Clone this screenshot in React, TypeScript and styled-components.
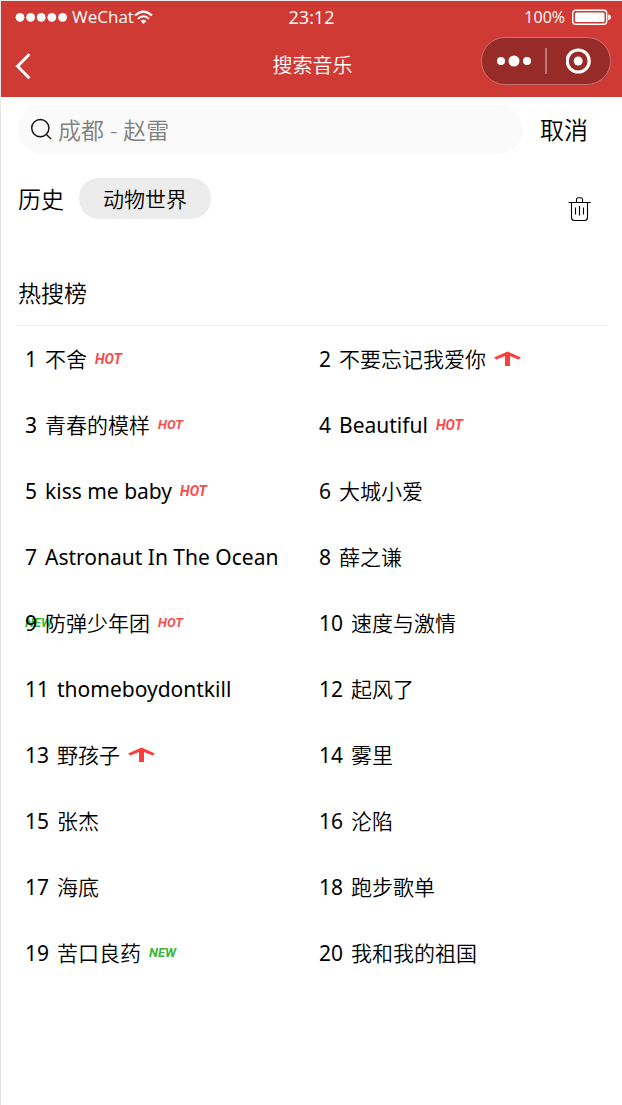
import React from "react";
import styled, { createGlobalStyle } from "styled-components";

const GlobalStyle = createGlobalStyle`
  *, *::before, *::after { box-sizing: border-box; }
  body {
    margin: 0;
    background: #fff;
    color: #000;
    font-family: "Noto Sans", "Noto Sans CJK SC", sans-serif;
  }
  button, input { font: inherit; color: inherit; }
  button { padding: 0; border: 0; background: none; cursor: pointer; }
  a { color: inherit; text-decoration: none; }
  svg { display: block; flex: none; }
`;

const Page = styled.div`
  min-height: 100vh;
  border-top: 1px solid #ebebeb;
  border-left: 1px solid #e5e5e5;
`;

const Header = styled.header`
  height: 96px;
  background: #d03a35;
  color: #fff;
`;

const Bar = styled.div<{ $height: number }>`
  display: grid;
  grid-template-columns: 1fr auto 1fr;
  align-items: center;
  height: ${(p) => p.$height}px;
  padding: 0 11px 0 14px;
`;

const TitleBar = styled(Bar)`
  padding: 2px 11px 0 13px;
`;

const StatusGroup = styled.div<{ $end?: boolean; $size: number }>`
  display: flex;
  align-items: center;
  justify-content: ${(p) => (p.$end ? "flex-end" : "flex-start")};
  font-family: "Open Sans", sans-serif;
  font-size: ${(p) => p.$size}px;
  line-height: 24px;
`;

const Clock = styled.time`
  margin-right: 3px;
  font-family: "Open Sans", sans-serif;
  font-size: 18px;
  line-height: 24px;
`;

const Signal = styled.svg`
  margin-right: 4px;
`;

const Battery = styled.svg`
  margin-left: 6px;
`;

const BackButton = styled.button`
  justify-self: start;
  color: #fff;
`;

const Title = styled.h1`
  margin: 0;
  font-size: 20px;
  line-height: 28px;
  font-weight: 350;
`;

const Capsule = styled.div`
  align-self: start;
  justify-self: end;
  display: flex;
  align-items: center;
  width: 130px;
  height: 48px;
  margin-top: 2px;
  border: 1px solid #c27370;
  border-radius: 24px;
  background: #962b27;
`;

const CapsuleButton = styled.button`
  flex: 1;
  display: flex;
  justify-content: center;
  color: #fff;
`;

const CapsuleDivider = styled.span`
  width: 2px;
  height: 26px;
  background: #bd7774;
`;

const Content = styled.main`
  padding: 8px 16px 0 17px;
`;

const SearchRow = styled.form`
  display: flex;
  align-items: center;
  height: 49px;
`;

const SearchBox = styled.label`
  flex: 1;
  display: flex;
  align-items: center;
  gap: 5px;
  height: 100%;
  padding: 0 12px;
  border-radius: 25px;
  background: #fafafa;
`;

const SearchInput = styled.input`
  flex: 1;
  min-width: 0;
  padding: 0;
  border: 0;
  outline: none;
  background: transparent;
  font-size: 23px;
  line-height: 32px;
  font-weight: 350;
  &::placeholder { color: #808080; opacity: 1; }
`;

const CancelButton = styled.button`
  margin: 0 18px 0 17px;
  font-size: 24px;
  line-height: 32px;
  font-weight: 350;
`;

const History = styled.section`
  display: flex;
  align-items: center;
  gap: 15px;
  margin-top: 24px;
  height: 41px;
`;

const Heading = styled.h2`
  margin: 0;
  font-size: 23px;
  line-height: 32px;
  font-weight: 350;
`;

const Chip = styled.button`
  height: 41px;
  padding: 0 24px;
  border-radius: 20px;
  background: #ececec;
  font-size: 21px;
  line-height: 32px;
  font-weight: 350;
`;

const ClearButton = styled.button`
  align-self: flex-end;
  margin: 0 15px -3px auto;
`;

const ChartHeader = styled.div`
  margin-top: 58px;
  padding-bottom: 16px;
  border-bottom: 1px solid #ececec;
`;

const Songs = styled.ol`
  display: grid;
  grid-template-columns: 1fr 1fr;
  margin: 0;
  padding: 0;
  list-style: none;
`;

const Song = styled.li`
  position: relative;
`;

const SongLink = styled.a`
  position: relative;
  display: flex;
  align-items: center;
  gap: 8px;
  height: 66px;
  padding-left: 7px;
  font-size: 21px;
  line-height: 32px;
  white-space: nowrap;
`;

const SongName = styled.span<{ $latin: boolean }>`
  font-weight: ${(p) => (p.$latin ? 400 : 350)};
`;

const Tag = styled.span<{ $fresh?: boolean; $small?: boolean }>`
  color: ${(p) => (p.$fresh ? "#3cb43c" : "#fa4b4b")};
  font: italic bold ${(p) => (p.$fresh || p.$small ? 13 : 14)}px/16px Roboto, sans-serif;
`;

const Underlay = styled.span`
  position: absolute;
  left: 7px;
  top: 25px;
  display: flex;
`;

type Mark = "hot" | "hotSmall" | "up" | "new";
type Entry = { name: string; mark?: Mark; under?: boolean };

const entries: Entry[] = [
  { name: "不舍", mark: "hot" },
  { name: "不要忘记我爱你", mark: "up" },
  { name: "青春的模样", mark: "hotSmall" },
  { name: "Beautiful", mark: "hot" },
  { name: "kiss me baby", mark: "hot" },
  { name: "大城小爱" },
  { name: "Astronaut In The Ocean" },
  { name: "薛之谦" },
  { name: "防弹少年团", mark: "hotSmall", under: true },
  { name: "速度与激情" },
  { name: "thomeboydontkill" },
  { name: "起风了" },
  { name: "野孩子", mark: "up" },
  { name: "雾里" },
  { name: "张杰" },
  { name: "沦陷" },
  { name: "海底" },
  { name: "跑步歌单" },
  { name: "苦口良药", mark: "new" },
  { name: "我和我的祖国" },
];

function MarkView({ mark }: { mark: Mark }) {
  if (mark === "up") {
    return (
      <svg width="27" height="16" viewBox="0 0 27 16" fill="#ff3c3c" role="img" aria-label="up">
        <path d="M13.5 0.5 L27 6.4 L24.6 8.4 L16 5 V15 H11 V5 L2.4 8.4 L0 6.4 Z" />
      </svg>
    );
  }
  if (mark === "new") return <Tag $fresh>NEW</Tag>;
  return <Tag $small={mark === "hotSmall"}>HOT</Tag>;
}

export default function App() {
  return (
    <>
      <GlobalStyle />
      <Page>
        <Header>
          <Bar $height={32}>
            <StatusGroup $size={17}>
              <Signal width="53" height="10" viewBox="0 0 53 10" fill="#fff">
                {[5, 15.6, 26.2, 36.8, 47.6].map((x) => (
                  <circle key={x} cx={x} cy="5.3" r="4.4" />
                ))}
              </Signal>
              WeChat
              <svg width="19" height="15" viewBox="0 0 19 15" fill="none" stroke="#fff" strokeWidth="2">
                <path d="M1 5.6 Q9.5 -2.4 18 5.6" />
                <path d="M4 8.9 Q9.5 3.5 15 8.9" />
                <path d="M6.6 11 Q9.5 8.6 12.4 11 L9.5 14 Z" fill="#fff" stroke="none" />
              </svg>
            </StatusGroup>
            <Clock>23:12</Clock>
            <StatusGroup $end $size={16}>
              100%
              <Battery width="40" height="16" viewBox="0 0 40 16" fill="#fff">
                <rect x="1.7" y="1.2" width="34" height="14" rx="3" fill="none" stroke="#fff" strokeWidth="1.4" />
                <rect x="4" y="3.5" width="29.5" height="9.5" rx="1.5" />
                <path d="M37.2 5.2 Q40 5.8 40 8.2 T37.2 11.2 Z" />
              </Battery>
            </StatusGroup>
          </Bar>
          <TitleBar $height={64}>
            <BackButton aria-label="返回">
              <svg width="18" height="28" viewBox="0 0 18 28" fill="none" stroke="#fff" strokeWidth="3">
                <path d="M15.4 2.2 L3.6 14.2 L15.4 26.2" />
              </svg>
            </BackButton>
            <Title>搜索音乐</Title>
            <Capsule>
              <CapsuleButton aria-label="更多">
                <svg width="34" height="12" viewBox="0 0 34 12" fill="#fff">
                  <circle cx="4" cy="6" r="4" />
                  <circle cx="17" cy="6" r="5.5" />
                  <circle cx="30" cy="6" r="4" />
                </svg>
              </CapsuleButton>
              <CapsuleDivider />
              <CapsuleButton aria-label="关闭">
                <svg width="26" height="26" viewBox="0 0 26 26">
                  <circle cx="12.2" cy="13" r="11" fill="none" stroke="#fff" strokeWidth="3.2" />
                  <circle cx="12.2" cy="13" r="4.5" fill="#fff" />
                </svg>
              </CapsuleButton>
            </Capsule>
          </TitleBar>
        </Header>
        <Content>
          <SearchRow onSubmit={(e) => e.preventDefault()}>
            <SearchBox>
              <svg width="23" height="23" viewBox="0 0 23 23" fill="none" stroke="#111" strokeWidth="1.4">
                <circle cx="10.3" cy="10.1" r="8.6" />
                <path d="M16.4 16.4 L21 21" />
              </svg>
              <SearchInput type="text" aria-label="搜索" placeholder="成都 - 赵雷" />
            </SearchBox>
            <CancelButton type="button">取消</CancelButton>
          </SearchRow>
          <History>
            <Heading>历史</Heading>
            <Chip>动物世界</Chip>
            <ClearButton aria-label="清空历史">
              <svg width="23" height="25" viewBox="0 0 23 25" fill="none" stroke="#000" strokeWidth="1.1">
                <path d="M0.5 5.5 H22.5 M8.5 5 V2.5 Q8.5 0.8 10.2 0.8 H12.8 Q14.5 0.8 14.5 2.5 V5" />
                <path d="M3.5 5.5 V20.5 Q3.5 23.5 6.5 23.5 H16.5 Q19.5 23.5 19.5 20.5 V5.5" />
                <path d="M7.5 10.5 V17.5 M11.5 9 V18.5 M15.5 10.5 V17.5" />
              </svg>
            </ClearButton>
          </History>
          <ChartHeader>
            <Heading>热搜榜</Heading>
          </ChartHeader>
          <Songs>
            {entries.map((entry, i) => (
              <Song key={entry.name}>
                {entry.under && (
                  <Underlay>
                    <Tag $fresh>NEW</Tag>
                  </Underlay>
                )}
                <SongLink href="#">
                  <span>{i + 1}</span>
                  <SongName $latin={/^[a-z]/i.test(entry.name)}>{entry.name}</SongName>
                  {entry.mark && <MarkView mark={entry.mark} />}
                </SongLink>
              </Song>
            ))}
          </Songs>
        </Content>
      </Page>
    </>
  );
}
